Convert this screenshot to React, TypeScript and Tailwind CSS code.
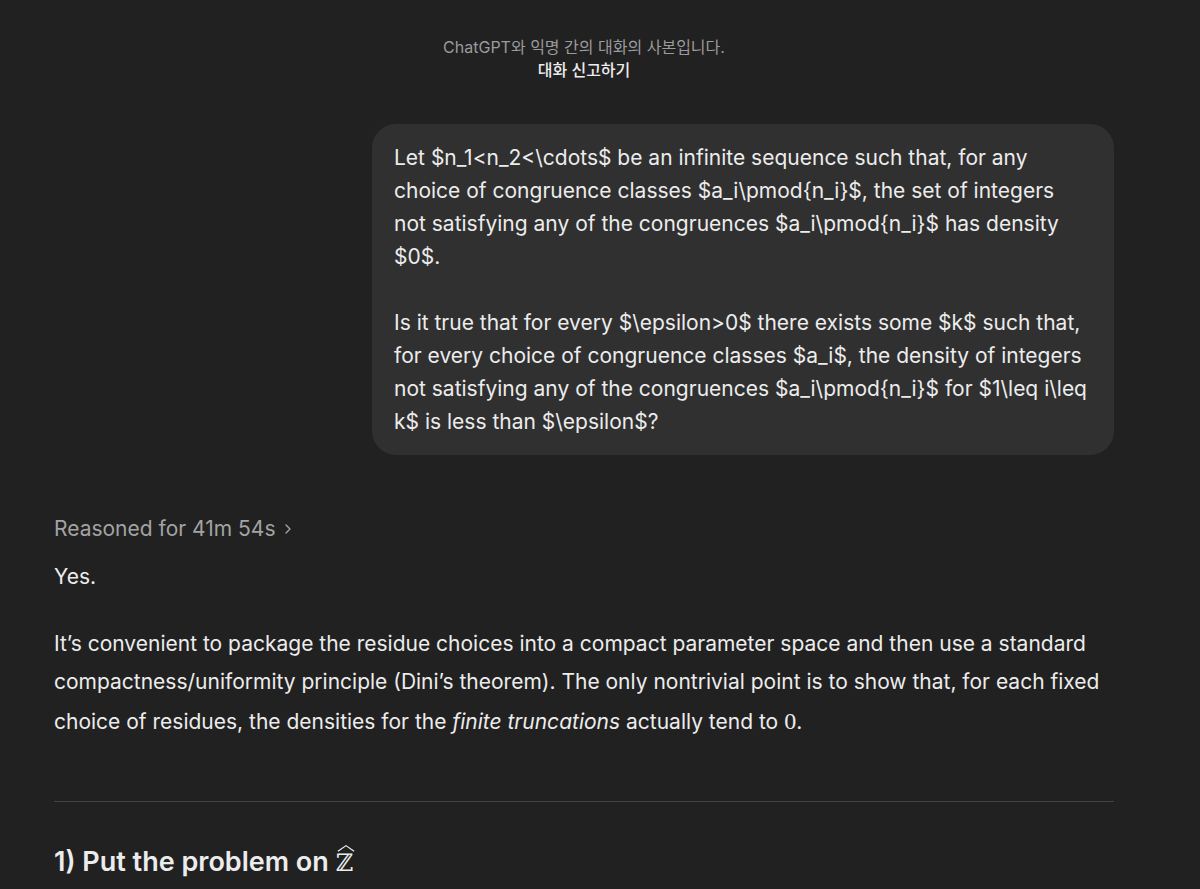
import React from 'react';
import { ChevronRight } from 'lucide-react';

const font = { fontFamily: 'Inter, "Noto Sans CJK KR", sans-serif' };

const question = [
  'Let $n_1<n_2<\\cdots$ be an infinite sequence such that, for any',
  'choice of congruence classes $a_i\\pmod{n_i}$, the set of integers',
  'not satisfying any of the congruences $a_i\\pmod{n_i}$ has density',
  '$0$.',
  '',
  'Is it true that for every $\\epsilon>0$ there exists some $k$ such that,',
  'for every choice of congruence classes $a_i$, the density of integers',
  'not satisfying any of the congruences $a_i\\pmod{n_i}$ for $1\\leq i\\leq',
  'k$ is less than $\\epsilon$?',
].join('\n');

const App: React.FC = () => {
  return (
    <div className="min-h-[889px] w-[1200px] bg-[#212121] text-[#ececec]" style={font}>
      <div className="w-[1168px] px-[54px]">
        {/* share banner */}
        <div className="flex flex-col items-center pt-[36px] text-[16px] leading-[23px]">
          <p className="text-[#9b9b9b]">ChatGPT와 익명 간의 대화의 사본입니다.</p>
          <p className="font-medium text-[#ececec]">대화 신고하기</p>
        </div>

        {/* user message */}
        <div className="mt-[42px] flex justify-end">
          <div className="w-[742px] whitespace-pre rounded-[24px] bg-[#303030] px-[22px] py-[17px] text-[21px] leading-[33px]">
            {question}
          </div>
        </div>

        {/* assistant */}
        <div className="mt-[55px] flex items-center gap-1 text-[21px] leading-[38px] text-[#a3a3a3]">
          <span>Reasoned for 41m 54s</span>
          <ChevronRight className="h-4 w-4" strokeWidth={2} />
        </div>
        <p className="mt-[10px] text-[21px] leading-[38.5px]">Yes.</p>
        <p className="mt-[28px] text-[21px] leading-[38.5px]">
          It’s convenient to package the residue choices into a compact parameter space and then use a standard
          compactness/uniformity principle (Dini’s theorem). The only nontrivial point is to show that, for each fixed
          choice of residues, the densities for the <em>finite truncations</em> actually tend to{' '}
          <span className="text-[24px]" style={{ fontFamily: '"Liberation Serif", serif' }}>0</span>.
        </p>

        <hr className="mt-[60px] border-t border-[#424242]" />

        <h2 className="mt-[42px] flex items-end text-[27px] font-semibold leading-[36px]">
          <span>1) Put the problem on</span>
          <span className="relative mb-[2px] ml-[7px] inline-block text-[24px] font-normal leading-[30px]" style={{ fontFamily: '"DejaVu Serif", serif' }}>
            ℤ
            <svg className="absolute left-[1px] top-[-4px] h-[8px] w-[18px]" viewBox="0 0 20 10" preserveAspectRatio="none">
              <path d="M1 9 L10 2 L19 9" fill="none" stroke="#ececec" strokeWidth="1.4" />
            </svg>
          </span>
        </h2>
      </div>
    </div>
  );
};

export default App;
